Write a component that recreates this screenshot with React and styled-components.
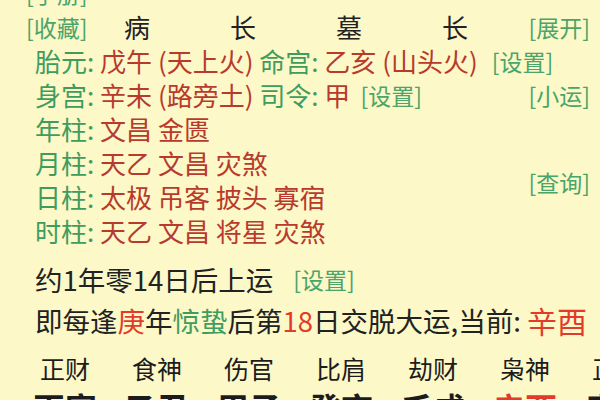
import React from 'react';
import styled, { createGlobalStyle } from 'styled-components';

const GlobalStyle = createGlobalStyle`
  html, body {
    margin: 0;
    padding: 0;
    background: #fcf8c8;
  }
  body {
    font-family: 'Noto Sans CJK SC', 'Noto Sans', sans-serif;
    color: #222;
  }
`;

const Page = styled.div`
  width: 600px;
  height: 400px;
  overflow: hidden;
  background: #fcf8c8;
`;

const Screen = styled.div`
  margin-top: -24px;
`;

const Line = styled.div`
  display: flex;
  align-items: center;
  height: 34px;
  line-height: 34px;
  padding-left: ${(p) => p.$indent || 35}px;
  padding-right: 10px;
  margin-top: ${(p) => p.$gap || 0}px;
  font-size: ${(p) => p.$size || 26}px;
  white-space: pre;
`;

const HeadRow = styled.div`
  display: grid;
  grid-template-columns: 58px repeat(4, 106px) 1fr;
  align-items: center;
  height: 34px;
  line-height: 34px;
  padding: 0 10px 0 26px;
  font-size: 26px;
  white-space: nowrap;
`;

const Cell = styled.span`
  text-align: center;
`;

const Label = styled.span`
  color: #3f9c5f;
`;

const Value = styled.span`
  color: ${(p) => (p.$bright ? '#e23b2b' : '#b83a2c')};
  font-size: ${(p) => (p.$size ? `${p.$size}px` : 'inherit')};
`;

const Link = styled.span`
  color: #4ba46a;
  font-size: 23px;
  margin-left: ${(p) => (p.$right ? 'auto' : `${p.$gap || 0}px`)};
  justify-self: ${(p) => (p.$right ? 'end' : 'start')};
`;

const Group = styled.div`
  display: flex;
`;

const Column = styled.div`
  flex: 1;
`;

const Aside = styled.div`
  padding: 53px 10px 0 0;
  height: 34px;
  line-height: 34px;
  display: flex;
  align-items: center;
`;

const GodRow = styled.div`
  display: grid;
  grid-template-columns: repeat(7, 92px);
  padding-left: 19px;
  margin-top: ${(p) => p.$gap || 0}px;
  height: ${(p) => (p.$big ? 40 : 34)}px;
  line-height: ${(p) => (p.$big ? 40 : 34)}px;
  align-items: center;
  font-size: ${(p) => (p.$big ? 32 : 25)}px;
  font-weight: ${(p) => (p.$big ? 700 : 400)};
  white-space: nowrap;
`;

const God = styled.span`
  text-align: center;
  color: ${(p) => (p.$current ? '#e23b2b' : '#1c1c1c')};
`;

const gods = ['正财', '食神', '伤官', '比肩', '劫财', '枭神', '正印'];
const luck = ['丙寅', '乙丑', '甲子', '癸亥', '壬戌', '辛酉', '庚申'];

const pillars = [
  ['年柱', '文昌 金匮'],
  ['月柱', '天乙 文昌 灾煞'],
  ['日柱', '太极 吊客 披头 寡宿'],
  ['时柱', '天乙 文昌 将星 灾煞'],
];

const App = () => {
  return (
    <Page>
      <GlobalStyle />
      <Screen>
        <Line $indent={26}>
          <Link>[手册]</Link>
        </Line>
        <HeadRow>
          <Link>[收藏]</Link>
          <Cell>病</Cell>
          <Cell>长</Cell>
          <Cell>墓</Cell>
          <Cell>长</Cell>
          <Link $right>[展开]</Link>
        </HeadRow>
        <Line>
          <Label>胎元: </Label>
          <Value>戊午 (天上火) </Value>
          <Label>命宫: </Label>
          <Value>乙亥 (山头火)</Value>
          <Link $gap={14}>[设置]</Link>
        </Line>
        <Line>
          <Label>身宫: </Label>
          <Value>辛未 (路旁土) </Value>
          <Label>司令: </Label>
          <Value>甲</Value>
          <Link $gap={10}>[设置]</Link>
          <Link $right>[小运]</Link>
        </Line>
        <Group>
          <Column>
            {pillars.map(([name, stars]) => (
              <Line key={name}>
                <Label>{name}: </Label>
                <Value>{stars}</Value>
              </Line>
            ))}
          </Column>
          <Aside>
            <Link>[查询]</Link>
          </Aside>
        </Group>
        <Line $gap={14} $size={27.5}>
          <span>约1年零14日后上运</span>
          <Link $gap={20}>[设置]</Link>
        </Line>
        <Line $gap={7} $size={27.5}>
          <span>即每逢</span>
          <Value $bright>庚</Value>
          <span>年</span>
          <Label>惊蛰</Label>
          <span>后第</span>
          <Value $bright>18</Value>
          <span>日交脱大运,当前: </span>
          <Value $bright $size={30}>辛酉</Value>
        </Line>
        <GodRow $gap={14}>
          {gods.map((g, i) => (
            <God key={i}>{g}</God>
          ))}
        </GodRow>
        <GodRow $big $gap={2}>
          {luck.map((g, i) => (
            <God key={i} $current={i === 5}>
              {g}
            </God>
          ))}
        </GodRow>
      </Screen>
    </Page>
  );
};

export default App;
